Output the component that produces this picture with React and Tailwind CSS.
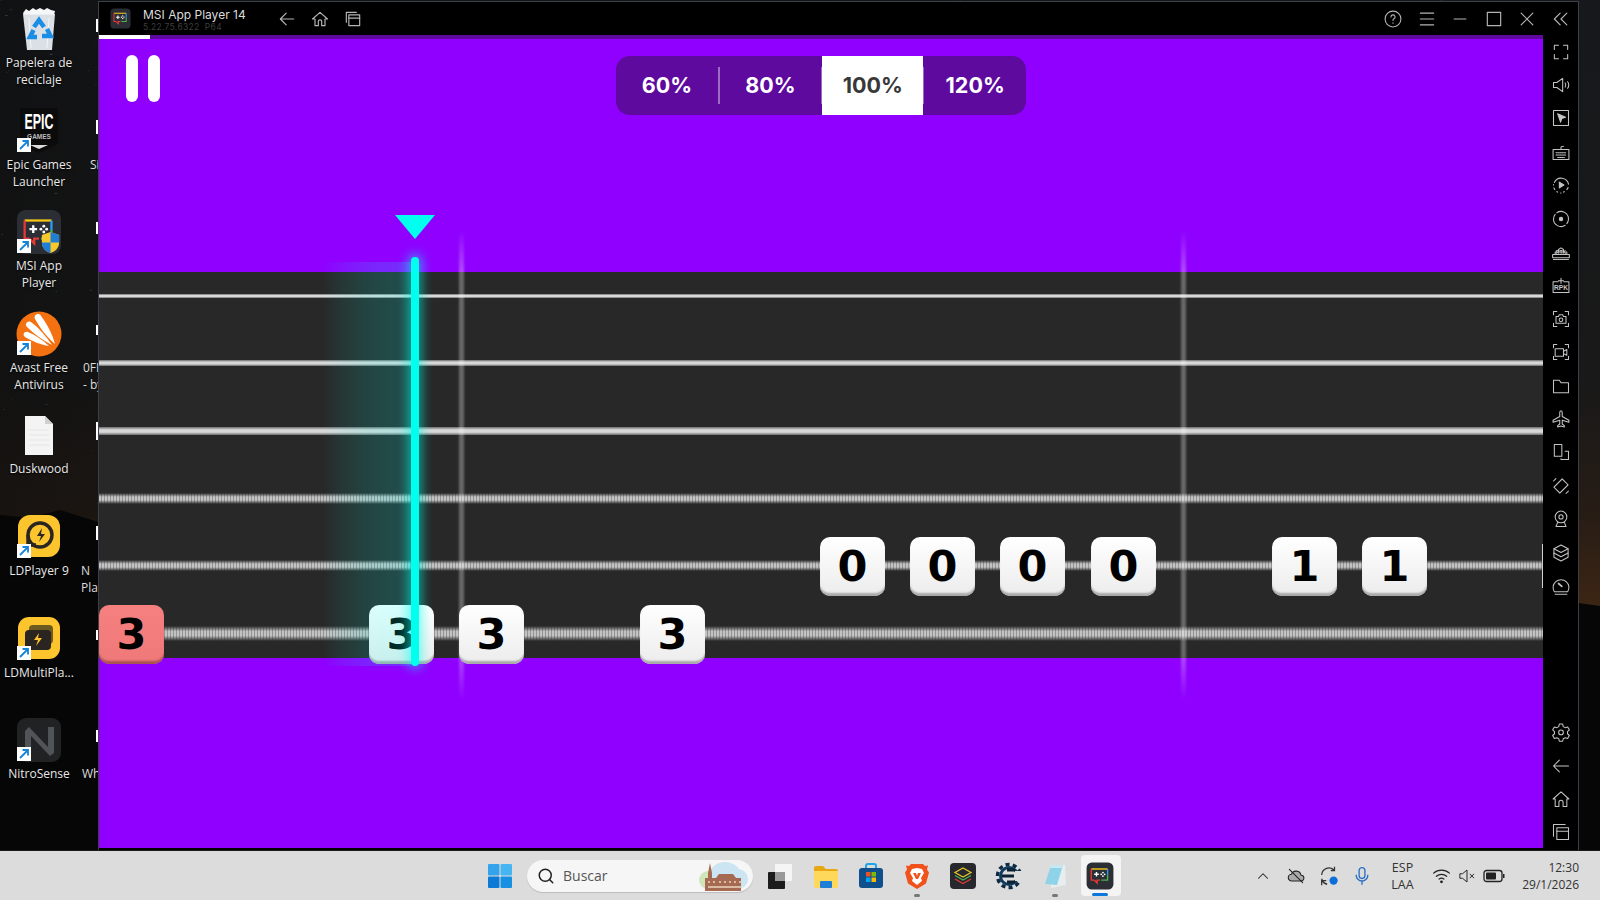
import React from "react";
import { Search } from "lucide-react";

const Ic = ({ children, s = 22, w = 1.4 }) => (
  <svg width={s} height={s} viewBox="0 0 24 24" fill="none" stroke="currentColor" strokeWidth={w} strokeLinecap="round" strokeLinejoin="round">{children}</svg>
);

const MsiLogo = ({ s = 46, shield = false }) => (
  <svg width={s} height={s} viewBox="0 0 48 48">
    <rect x="1" y="1" width="46" height="46" rx="9" fill="#2b2e34" />
    <path d="M9 12H37" stroke="#f5c518" strokeWidth="2.4" fill="none" />
    <path d="M9 12V31H14" stroke="#e53935" strokeWidth="2.4" fill="none" />
    <path d="M14 31L19 36V31H24" stroke="#e53935" strokeWidth="2.4" fill="none" />
    <path d="M37 12V22" stroke="#2e9bf0" strokeWidth="2.4" fill="none" />
    <path d="M37 22V31H26" stroke="#4caf50" strokeWidth="2.4" fill="none" />
    <path d="M14 21h8M18 17v8" stroke="#fff" strokeWidth="2.4" />
    <circle cx="29" cy="18" r="1.5" fill="#fff" /><circle cx="29" cy="24" r="1.5" fill="#fff" />
    <circle cx="26" cy="21" r="1.5" fill="#fff" /><circle cx="32" cy="21" r="1.5" fill="#fff" />
    {shield && (
      <g>
        <path d="M27 27l9-3 9 3v8c0 6-4 9-9 11-5-2-9-5-9-11z" fill="#f7c92c" />
        <path d="M36 24l9 3v8H36zM27 35h9v11c-5-2-9-5-9-11z" fill="#1f7fd6" />
      </g>
    )}
  </svg>
);

const Arrow = () => (
  <span className="absolute left-px bottom-0.5 flex h-[14px] w-[14px] items-center justify-center bg-white">
    <svg width="12" height="12" viewBox="0 0 12 12" fill="none" stroke="#1583d8" strokeWidth="1.8"><path d="M2 10L9.5 2.5M4.5 2H10V7.5" /></svg>
  </span>
);

const Recycle = () => (
  <svg width="46" height="46" viewBox="0 0 46 46">
    <path d="M7 7l3-4 3 2 4-3 3 2 4-2 4 2 3-2 4 2 4 1-1 4H8z" fill="#f4f6f8" />
    <path d="M7 8h32l-3 36H11z" fill="#e6ecf1" opacity="0.95" />
    <path d="M13 12l2 30M33 12l-2 30" stroke="#fff" strokeWidth="1" opacity="0.7" />
    <g fill="none" stroke="#1a8ee6" strokeWidth="4.500">
      <path d="M18 21l5-7 5 7" />
      <path d="M31 23l3.500 7H26" />
      <path d="M21 31h-7l3.500-7" />
    </g>
  </svg>
);

const Epic = () => (
  <svg width="46" height="46" viewBox="0 0 46 46">
    <path d="M4 -2h38v38l-19 9-19-9z" fill="#0b0b0b" />
    <text x="23" y="21" textAnchor="middle" fontFamily="Liberation Sans, sans-serif" fontWeight="700" fontSize="22" fill="#fff" textLength="29" lengthAdjust="spacingAndGlyphs">EPIC</text>
    <text x="23" y="31" textAnchor="middle" fontFamily="Liberation Sans, sans-serif" fontWeight="700" fontSize="6.500" fill="#bbb">GAMES</text>
    <path d="M14 37h18l-9 4z" fill="#ddd" />
  </svg>
);

const Avast = () => (
  <svg width="46" height="46" viewBox="0 0 46 46">
    <circle cx="23" cy="23" r="22.5" fill="#f37111" />
    <path d="M39 33C30 25 24 17 19 8C17 4 23 1 25 5C31 13 36 22 39 33z" fill="#fff" />
    <path d="M36 34C26 29 18 23 11 16C8 13 12 9 15 11C23 17 30 25 36 34z" fill="#fff" />
    <path d="M33 35C25 34 16 30 9 26C6 24 8 20 12 21C19 24 27 29 33 35z" fill="#fff" />
  </svg>
);

const FileIc = () => (
  <svg width="46" height="46" viewBox="0 0 46 46">
    <path d="M9 4h20l8 8v31H9z" fill="#f4f4f4" />
    <path d="M29 4v8h8z" fill="#cfcfcf" />
    <path d="M13 18h20M13 23h20M13 28h20M13 33h20" stroke="#e6e6e6" />
  </svg>
);

const LD = () => (
  <svg width="46" height="46" viewBox="0 0 46 46">
    <rect x="2" y="1" width="42" height="42" rx="12" fill="#fcc52d" />
    <circle cx="24" cy="21" r="12" fill="none" stroke="#2a2520" strokeWidth="3.4" />
    <path d="M12 21v10H20" fill="none" stroke="#2a2520" strokeWidth="3.4" />
    <path d="M26 14l-5 8h4l-2 6 6-8h-4z" fill="#2a2520" />
  </svg>
);

const LDM = () => (
  <svg width="46" height="46" viewBox="0 0 46 46">
    <rect x="2" y="1" width="42" height="42" rx="11" fill="#fcc52d" />
    <rect x="13" y="9" width="24" height="19" rx="4" fill="#6d5a20" />
    <rect x="9" y="14" width="26" height="20" rx="4" fill="#2a2520" />
    <path d="M23 17l-5 7h4l-2 6 6-8h-4z" fill="#fcc52d" />
  </svg>
);

const Nitro = () => (
  <svg width="46" height="46" viewBox="0 0 46 46">
    <rect x="1" y="1" width="44" height="44" rx="9" fill="#202224" />
    <path d="M9 37V14l4-4 19 20V10h6v26l-4 3L15 19v18z" fill="#515456" />
  </svg>
);

const items = [
  { icon: <Recycle />, label: ["Papelera de", "reciclaje"], arrow: false, side: [], pad: "pl-3" },
  { icon: <Epic />, label: ["Epic Games", "Launcher"], arrow: true, side: ["Si"], pad: "pl-3" },
  { icon: <MsiLogo shield />, label: ["MSI App", "Player"], arrow: true, side: [], pad: "pl-3" },
  { icon: <Avast />, label: ["Avast Free", "Antivirus"], arrow: true, side: ["0FF", "- by"], pad: "pl-[5px]" },
  { icon: <FileIc />, label: ["Duskwood"], arrow: false, side: [], pad: "pl-3" },
  { icon: <LD />, label: ["LDPlayer 9"], arrow: true, side: ["N", "Play"], pad: "pl-[3px]" },
  { icon: <LDM />, label: ["LDMultiPla..."], arrow: true, side: [], pad: "pl-3" },
  { icon: <Nitro />, label: ["NitroSense"], arrow: true, side: ["Wh"], pad: "pl-1" },
];

const ticks = ["h-[13px]", "h-[14px]", "h-[12px]", "h-[10px]", "h-[18px]", "h-[14px]", "h-[10px]", "h-[12px]"];

const DesktopIcons = () => (
  <div className="flex w-[98px] shrink-0 overflow-hidden">
    <div className="flex w-[78px] shrink-0 flex-col">
      {items.map((it, i) => (
        <div key={i} className="flex h-[101.6px] shrink-0 flex-col items-center">
          <div className="flex h-[54px] w-full items-center justify-center pt-1">
            <div className="relative h-[46px] w-[46px]">
              {it.icon}
              {it.arrow && <Arrow />}
            </div>
          </div>
          <div className="whitespace-nowrap text-center text-[12px] leading-[17px] text-[#e8e8e8] [text-shadow:0_1px_2px_#000]">
            {it.label.map((l) => <div key={l}>{l}</div>)}
          </div>
        </div>
      ))}
    </div>
    <div className="flex w-5 shrink-0 flex-col">
      {items.map((it, i) => (
        <div key={i} className="flex h-[101.6px] shrink-0 flex-col overflow-hidden">
          <div className="flex h-[54px] items-center justify-end pb-1">
            <span className={`w-0.5 bg-white ${ticks[i]}`} />
          </div>
          <div className={`whitespace-nowrap text-[12px] leading-[17px] text-[#dddddd] ${it.pad}`}>
            {it.side.map((l) => <div key={l}>{l}</div>)}
          </div>
        </div>
      ))}
    </div>
  </div>
);

const TitleBar = () => (
  <div className="flex h-[33px] shrink-0 items-center bg-black text-[#b4b4b4]">
    <div className="ml-[11px] flex h-[21px] w-[21px] items-center justify-center"><MsiLogo s={21} /></div>
    <div className="ml-[12px] flex w-[116px] flex-col pt-px font-['Inter',sans-serif]">
      <span className="whitespace-nowrap text-[12px] leading-[15px] text-[#dcdcdc]">MSI App Player 14</span>
      <span className="whitespace-nowrap text-[8.5px] leading-[10px] tracking-[0.3px] text-[#3d3d3d]">5.22.75.6322&nbsp;&nbsp;P64</span>
    </div>
    <div className="ml-[11px] flex">
      <div className="flex w-[33px] justify-center"><Ic s={20}><path d="M20 12H4M11 5l-7 7 7 7" /></Ic></div>
      <div className="flex w-[33px] justify-center"><Ic s={20}><path d="M6 20v-8H3l9-8 9 8h-3v8h-4v-5a2 2 0 0 0-4 0v5z" /></Ic></div>
      <div className="flex w-[34px] justify-center"><Ic s={20}><path d="M4 16V4h12" /><rect x="7" y="7" width="13" height="13" /><path d="M7 11h13" /></Ic></div>
    </div>
    <div className="ml-auto flex">
      <div className="flex w-[33.5px] justify-center"><Ic s={20} w={1.3}><circle cx="12" cy="12" r="9.5" /><path d="M9.5 9.5a2.5 2.5 0 1 1 3.6 2.3c-.8.4-1.1 1-1.1 2" /><path d="M12 16.6v.4" /></Ic></div>
      <div className="flex w-[33.5px] justify-center"><Ic s={20}><path d="M4 5h16M4 12h16M4 19h16" /></Ic></div>
      <div className="flex w-[33.5px] justify-center"><Ic s={20}><path d="M5 12h14" /></Ic></div>
      <div className="flex w-[33.5px] justify-center"><Ic s={20}><rect x="4" y="4" width="16" height="16" /></Ic></div>
      <div className="flex w-[33.5px] justify-center"><Ic s={20}><path d="M5 5l14 14M19 5L5 19" /></Ic></div>
      <div className="flex w-[34px] justify-center"><Ic s={20}><path d="M11 5l-7 7 7 7M19 5l-7 7 7 7" /></Ic></div>
    </div>
  </div>
);

const tinyText = "Liberation Sans, sans-serif";
const sideTop = [
  <path d="M4 9V4h5M15 4h5v5M20 15v5h-5M9 20H4v-5" />,
  <><path d="M3 9h4l7-5v16l-7-5H3z" /><path d="M17 9.5q1.6 2.5 0 5M20 8q2.6 4 0 8" /></>,
  <><rect x="3" y="3" width="18" height="18" /><path d="M8 7l9.5 4-4.5 1.5L11.5 17z" fill="currentColor" /></>,
  <><rect x="2.5" y="9" width="19" height="12" /><path d="M12 9V6.5C12 5 13 5 15 5" /><path d="M6 13h12M6 15.5h12M8 18.5h8" strokeDasharray="1.5 1" /></>,
  <><path d="M4 9a9 9 0 0 1 17 2M20.5 15a9 9 0 0 1-1.5 2.5M16 20l-1 .5M12 21.500h-.5M8 20.500l-1-.5M4.500 17.500l-1-2M3 12v-.5" /><path d="M10 8.500l5.500 3.500-5.500 3.500z" fill="currentColor" /></>,
  <><path d="M7 4.500A9 9 0 0 1 21 12a9 9 0 0 1-2 5.500M17 19.500A9 9 0 0 1 3 12a9 9 0 0 1 2-5.500" /><circle cx="12" cy="12" r="2" fill="currentColor" /></>,
  <><path d="M2 15h20v4H2zM5 15v-3h14v3M9 12V9l3-2 3 2v3" /><path d="M3 21h18" strokeDasharray="1.500 1" /><text x="12" y="14.500" textAnchor="middle" fontSize="6" fontFamily={tinyText} fontWeight="700" fill="currentColor" stroke="none">RTK</text></>,
  <><path d="M2.500 8h6M15.500 8h6v13h-19V8M12 4v6M9 7h6" /><text x="12" y="18.500" textAnchor="middle" fontSize="8" fontFamily={tinyText} fontWeight="700" fill="currentColor" stroke="none">RPK</text></>,
  <><path d="M3 7V3h4M17 3h4v4M21 17v4h-4M7 21H3v-4" /><path d="M6 9h3l1-2h4l1 2h3v8H6z" /><circle cx="12" cy="13" r="2.200" /></>,
  <><path d="M3 7V3h4M17 3h4v4M21 17v4h-4M7 21H3v-4" /><rect x="5" y="8" width="10" height="9" /><path d="M15 11l4-2v7l-4-2" /></>,
  <path d="M3 5h7l2 3h9v12H3z" />,
  <path d="M12 2c1 0 1.500 1 1.500 2.500V9l8 4.500V16l-8-2.500V18l2.500 2v1.500L12 20.500 8 21.500V20l2.500-2v-4.500L2.500 16v-2.500l8-4.500V4.500C10.500 3 11 2 12 2z" />,
  <><rect x="4" y="3" width="9" height="14" /><path d="M17 11h4v10h-9v-1" /></>,
  <><rect x="5" y="7" width="14" height="10" transform="rotate(-45 12 12)" /><path d="M3 6l3-3M18 21l3-3" strokeDasharray="1.500 1" /></>,
  <><circle cx="12" cy="9.500" r="7" /><circle cx="12" cy="9.500" r="2.500" /><path d="M8 16l-2 5h12l-2-5" /></>,
  <><path d="M12 2.500l8.500 4.500v10L12 21.500 3.500 17V7z" /><path d="M3.500 7L12 11.500 20.500 7M3.500 12L12 16.500 20.500 12" /></>,
  <><path d="M4 19a9.500 9.500 0 1 1 16 0z" /><path d="M9 9l4 3.500" strokeWidth="2" /><path d="M5 22h14" strokeDasharray="1.500 1" /></>,
];
const sideBottom = [
  <><path d="M10 2.500h4l.7 3 2.300 1.300 3-.9 2 3.500-2.200 2.100v2.600l2.200 2.100-2 3.500-3-.9-2.300 1.300-.7 3h-4l-.7-3L7 18.800l-3 .9-2-3.500 2.200-2.100v-2.600L2 9.400l2-3.500 3 .9 2.300-1.300z" /><circle cx="12" cy="12.500" r="2.800" /></>,
  <path d="M21 12H3M10 5l-7 7 7 7" />,
  <path d="M5 21v-9H2.500L12 3.500l9.500 8.500H19v9h-4.500v-5a2.500 2.500 0 0 0-5 0v5z" />,
  <><path d="M3 17V3h14" /><rect x="7" y="7" width="14" height="14" /><path d="M7 11h14" /></>,
];

const SideBar = () => (
  <div className="relative -mb-0.5 flex w-[35px] shrink-0 flex-col justify-between bg-black pb-px text-[#c4c4c4]">
    <span className="absolute -left-px top-[509px] h-[44px] w-px bg-[#cfcfcf]" />
    <div className="flex flex-col">
      {sideTop.map((p, i) => (
        <div key={i} className="flex h-[33.4px] items-center justify-center"><Ic s={20} w={1.25}>{p}</Ic></div>
      ))}
    </div>
    <div className="flex flex-col">
      {sideBottom.map((p, i) => (
        <div key={i} className="flex h-[33.4px] items-center justify-center"><Ic s={20} w={1.25}>{p}</Ic></div>
      ))}
    </div>
  </div>
);

const SpeedPill = () => (
  <div className="flex h-[59px] w-[410px] items-stretch rounded-[14px] bg-[#5e0a9e] font-['Inter',sans-serif] text-[21.5px] font-bold text-white">
    <div className="flex flex-1 items-center justify-center">60%</div>
    <div className="my-[11px] w-0.5 bg-white/40" />
    <div className="flex flex-1 items-center justify-center">80%</div>
    <div className="my-[11px] w-px bg-white/40" />
    <div className="flex w-[101px] items-center justify-center bg-white text-[#383838]">100%</div>
    <div className="my-[11px] w-px bg-white/40" />
    <div className="flex flex-1 items-center justify-center">120%</div>
  </div>
);

const Note = ({ pos, n, red }) => (
  <div className={`absolute z-20 flex h-[59px] w-[65px] items-center justify-center rounded-[10px] font-['DejaVu_Sans',sans-serif] text-[43px] font-bold leading-none text-black ${pos} ${red ? "bg-[linear-gradient(180deg,#f68080,#ef7878)] shadow-[inset_0_-4px_2px_-1px_#a85252]" : "bg-[linear-gradient(180deg,#ffffff,#ececec)] shadow-[inset_0_-4px_2px_-1px_#a9a9a9]"}`}>
    {n}
  </div>
);

const Wound = ({ h }) => (
  <div className={`${h} w-full shrink-0 bg-[linear-gradient(180deg,#282828,rgba(40,40,40,0.1)_35%,rgba(40,40,40,0.1)_65%,#282828),repeating-linear-gradient(90deg,#d4d4d4_0_2px,#a0a0a0_2px_3px)]`} />
);
const Plain = ({ h }) => (
  <div className={`${h} w-full shrink-0 bg-[linear-gradient(180deg,#6a6a6a,#d8d8d8_35%,#d8d8d8_65%,#6a6a6a)]`} />
);
const Str = ({ children }) => <div className="flex h-0 items-center">{children}</div>;

const Board = () => (
  <div className="relative mt-[157px] flex h-[386px] flex-col gap-[67.6px] bg-[#282828] pt-[23.5px]">
    <Str><Plain h="h-[4px]" /></Str>
    <Str><Plain h="h-[6px]" /></Str>
    <Str><Plain h="h-[8px]" /></Str>
    <Str><Wound h="h-[11px]" /></Str>
    <Str><Wound h="h-[11px]" /></Str>
    <Str><Wound h="h-[15px]" /></Str>

    <div className="absolute left-[360px] top-[-42px] z-10 h-[470px] w-[5px] bg-[linear-gradient(180deg,transparent,rgba(255,255,255,0.3)_9%,rgba(255,255,255,0.3)_90%,transparent)] blur-[1px]" />
    <div className="absolute left-[1082px] top-[-42px] z-10 h-[470px] w-[5px] bg-[linear-gradient(180deg,transparent,rgba(255,255,255,0.3)_9%,rgba(255,255,255,0.3)_90%,transparent)] blur-[1px]" />

    <Note pos="left-0 top-[333px]" n="3" red />
    <Note pos="left-[270px] top-[333px]" n="3" />
    <Note pos="left-[360px] top-[333px]" n="3" />
    <Note pos="left-[541px] top-[333px]" n="3" />
    <Note pos="left-[721px] top-[265px]" n="0" />
    <Note pos="left-[811px] top-[265px]" n="0" />
    <Note pos="left-[901px] top-[265px]" n="0" />
    <Note pos="left-[992px] top-[265px]" n="0" />
    <Note pos="left-[1173px] top-[265px]" n="1" />
    <Note pos="left-[1263px] top-[265px]" n="1" />

    <div className="absolute left-[224px] top-[-10px] z-30 h-[404px] w-[88px] bg-[linear-gradient(90deg,transparent,rgba(0,255,238,0.07)_22%,rgba(0,255,238,0.14)_55%,rgba(0,255,238,0.18))]" />
    <div className="absolute left-[296px] top-[-57px] z-30 h-6 w-10 bg-[#00ffee] [clip-path:polygon(0_0,100%_0,50%_100%)]" />
    <div className="absolute left-[312px] top-[-15px] z-30 h-[409px] w-2 rounded-full bg-[#00ffee] shadow-[0_0_11px_3px_rgba(0,255,238,0.55)]" />
  </div>
);

const Game = () => (
  <div className="flex min-w-0 flex-1 flex-col bg-[#8f00ff]">
    <div className="flex h-1 shrink-0 bg-[#5e0a9e]"><div className="w-[51px] bg-white" /></div>
    <div className="grid h-[76px] shrink-0 grid-cols-[1fr_auto_1fr] items-start pt-[17px]">
      <div className="flex gap-[10px] pl-[27px]">
        <span className="-mt-px h-[47px] w-3 rounded-full bg-white" />
        <span className="-mt-px h-[47px] w-3 rounded-full bg-white" />
      </div>
      <SpeedPill />
    </div>
    <Board />
  </div>
);

const Win = () => (
  <div className="mt-px flex h-[849px] w-[1481px] shrink-0 flex-col border-x border-t border-[#3b4048] bg-black">
    <TitleBar />
    <div className="flex min-h-0 flex-1 pb-0.5">
      <Game />
      <SideBar />
    </div>
  </div>
);

const specks = Array.from({ length: 320 }, (_, i) => ({
  x: (i * 97.3) % 100,
  y: (i * i * 0.37 + i * 13) % 60,
  o: 0.05 + ((i * 7) % 10) / 70,
}));

const Wallpaper = () => (
  <svg className="absolute inset-0" width="1600" height="850" viewBox="0 0 1600 850" preserveAspectRatio="none">
    <defs>
      <linearGradient id="sky" x1="0" y1="0" x2="0" y2="1">
        <stop offset="0" stopColor="#16181b" />
        <stop offset="0.45" stopColor="#191919" />
        <stop offset="0.6" stopColor="#261c15" />
        <stop offset="0.7" stopColor="#3a2414" />
      </linearGradient>
      <linearGradient id="dim" x1="0" y1="0" x2="1" y2="0">
        <stop offset="0" stopColor="#0c0c0c" stopOpacity="0.55" />
        <stop offset="0.07" stopColor="#0c0c0c" stopOpacity="0.4" />
        <stop offset="0.9" stopColor="#0c0c0c" stopOpacity="0" />
      </linearGradient>
    </defs>
    <rect width="1600" height="850" fill="url(#sky)" />
    <rect width="1600" height="850" fill="url(#dim)" />
    <path d="M0 515L30 518 60 510 98 522 400 560 1000 590 1578 603 1600 606V850H0z" fill="#060606" />
    {specks.map((p, i) => (
      <rect key={i} x={`${p.x}%`} y={`${p.y}%`} width={i % 3 === 0 ? 3 : 1} height="1" fill="#fff" opacity={p.o} />
    ))}
  </svg>
);

const TaskView = () => (
  <svg width="28" height="28" viewBox="0 0 28 28">
    <rect x="2" y="10" width="17" height="17" rx="1" fill="#1c1c1c" />
    <rect x="9" y="2" width="17" height="17" rx="1" fill="#f5f5f5" />
    <rect x="9" y="10" width="10" height="9" fill="#9a9a9a" />
  </svg>
);
const Explorer = () => (
  <svg width="28" height="28" viewBox="0 0 28 28">
    <path d="M2 6a2 2 0 0 1 2-2h7l3 3h10a2 2 0 0 1 2 2v15H2z" fill="#e5a812" />
    <path d="M2 9h24v15a2 2 0 0 1-2 2H4a2 2 0 0 1-2-2z" fill="#fdd85b" />
    <rect x="8" y="19" width="12" height="7" rx="1" fill="#1f7fd6" />
  </svg>
);
const Store = () => (
  <svg width="28" height="28" viewBox="0 0 28 28">
    <path d="M9 7V4a2 2 0 0 1 2-2h6a2 2 0 0 1 2 2v3" fill="none" stroke="#21a3e8" strokeWidth="2" />
    <rect x="2" y="6" width="24" height="20" rx="3" fill="#0e4f8c" />
    <rect x="9" y="10" width="4.500" height="4.500" fill="#f25022" /><rect x="14.500" y="10" width="4.500" height="4.500" fill="#7fba00" />
    <rect x="9" y="15.500" width="4.500" height="4.500" fill="#00a4ef" /><rect x="14.500" y="15.500" width="4.500" height="4.500" fill="#ffb900" />
  </svg>
);
const Brave = () => (
  <svg width="28" height="28" viewBox="0 0 28 28">
    <path d="M8 2h12l2 2 3-.5-1 4 2 3-3 11-9 5.500-9-5.500-3-11 2-3-1-4 3 .5z" fill="#f1511b" />
    <path d="M14 6l5 1 2 4-3 5 1 3-5 4-5-4 1-3-3-5 2-4z" fill="#fff" />
    <path d="M10 11h3l1 3 1-3h3l-3 6h-2z" fill="#f1511b" />
  </svg>
);
const Cube = () => (
  <svg width="28" height="28" viewBox="0 0 28 28">
    <rect x="1" y="1" width="26" height="26" rx="4" fill="#26282d" />
    <path d="M14 6l8 4.500-8 4.500-8-4.500z" fill="none" stroke="#e6c229" strokeWidth="1.300" />
    <path d="M6 13.500l8 4.500 8-4.500" fill="none" stroke="#4caf50" strokeWidth="1.300" />
    <path d="M6 17l8 4.500 8-4.500" fill="none" stroke="#e53935" strokeWidth="1.300" />
  </svg>
);
const Cheat = () => (
  <svg width="28" height="28" viewBox="0 0 28 28">
    <circle cx="14" cy="14" r="11.500" fill="none" stroke="#0c2a44" strokeWidth="3.500" strokeDasharray="4 3.200" />
    <circle cx="14" cy="14" r="8.500" fill="none" stroke="#0f3a5c" strokeWidth="3" />
    <path d="M12 8h8M7 14h12M12 20h8" stroke="#0c2033" strokeWidth="3" />
    <rect x="20" y="9" width="8" height="10" fill="#dcdcdc" />
  </svg>
);
const Notepad = () => (
  <svg width="28" height="28" viewBox="0 0 28 28">
    <path d="M9 3l15 0 1 20-15 3z" fill="#e8edf0" />
    <path d="M4 22L10 3h12L16 23z" fill="#8fd3e8" />
    <path d="M10 3h12l-1 3H9z" fill="#c7e8f2" />
  </svg>
);
const City = () => (
  <svg width="50" height="30" viewBox="0 0 50 30">
    <ellipse cx="9" cy="19" rx="9" ry="9" fill="#cfe6b8" />
    <ellipse cx="26" cy="13" rx="15" ry="12" fill="#cbe6f2" />
    <ellipse cx="39" cy="18" rx="10" ry="10" fill="#cbe6f2" />
    <path d="M6 30V17h3V12l2-10 2 10v5h4l3-4h14l3 4h5v13z" fill="#a66a52" />
    <path d="M9 21h2M14 21h2M20 21h2M25 21h2M30 21h2M35 21h2M40 21h2M9 26h33" stroke="#ecd5ba" strokeWidth="1.400" />
  </svg>
);

const taskIcons = [
  { c: <TaskView /> },
  { c: <Explorer /> },
  { c: <Store /> },
  { c: <Brave />, dot: true },
  { c: <Cube /> },
  { c: <Cheat /> },
  { c: <Notepad />, dot: true },
  { c: <MsiLogo s={28} />, active: true },
];

const Tray = () => (
  <div className="ml-auto flex h-full w-[354px] shrink-0 items-center text-[#222] font-['Open_Sans',sans-serif]">
    <div className="flex w-[33px] justify-center"><Ic s={18}><path d="M6 15l6-6 6 6" /></Ic></div>
    <div className="flex w-[33px] justify-center">
      <Ic s={20} w={1.3}><path d="M7 18a4 4 0 0 1-.5-8 6 6 0 0 1 11.500 1 3.500 3.500 0 0 1 0 7z" fill="#aaa" /><path d="M4 4l16 16" /></Ic>
    </div>
    <div className="flex w-[33px] justify-center">
      <svg width="22" height="22" viewBox="0 0 24 24" fill="none" stroke="#333" strokeWidth="1.400">
        <path d="M4 11a8 8 0 0 1 14-5M18 2v4h-4M4 15a8 8 0 0 0 6 6M4 22v-5h5" />
        <circle cx="17" cy="17" r="4.500" fill="#0a6fd8" stroke="none" />
      </svg>
    </div>
    <div className="flex w-[33px] justify-center">
      <svg width="20" height="22" viewBox="0 0 24 24" fill="none" stroke="#2b6fc4" strokeWidth="1.600" strokeLinecap="round">
        <rect x="8.500" y="2" width="7" height="13" rx="3.500" /><path d="M5 11a7 7 0 0 0 14 0M12 18v4" />
      </svg>
    </div>
    <div className="ml-[1.500px] flex w-[46px] flex-col items-center text-[12.5px] leading-[17px] text-[#333]"><span>ESP</span><span>LAA</span></div>
    <div className="ml-[3px] flex w-[26px] justify-center">
      <Ic s={19} w={1.5}><path d="M2 9a15 15 0 0 1 20 0M5.500 13a10 10 0 0 1 13 0M9 16.500a5 5 0 0 1 6 0" /><circle cx="12" cy="20" r="1" fill="currentColor" /></Ic>
    </div>
    <div className="flex w-6 justify-center">
      <Ic s={18} w={1.3}><path d="M3 9h3l6-5v16l-6-5H3z" /><path d="M16 9.500l5 5M21 9.500l-5 5" /></Ic>
    </div>
    <div className="flex w-[30px] justify-center">
      <svg width="22" height="14" viewBox="0 0 22 14"><rect x="1" y="1.500" width="18" height="11" rx="2.500" fill="none" stroke="#222" strokeWidth="1.300" /><rect x="3" y="3.500" width="10" height="7" rx="1" fill="#222" /><rect x="20" y="5" width="1.500" height="4" fill="#222" /></svg>
    </div>
    <div className="flex flex-1 flex-col items-end pr-[21px] text-[12px] leading-[17px] text-[#333]"><span>12:30</span><span>29/1/2026</span></div>
  </div>
);

const Taskbar = () => (
  <div className="flex h-[50px] shrink-0 items-center border-t border-[#1a1a1a] bg-[#dcdcdc] pl-[487px] font-['Open_Sans',sans-serif]">
    <svg width="26" height="26" viewBox="0 0 26 26" className="shrink-0">
      <rect x="1" y="1" width="11.500" height="11.500" rx="1" fill="#34a3ec" /><rect x="13.500" y="1" width="11.500" height="11.500" rx="1" fill="#46b5f2" />
      <rect x="1" y="13.500" width="11.500" height="11.500" rx="1" fill="#0d7bd6" /><rect x="13.500" y="13.500" width="11.500" height="11.500" rx="1" fill="#1890e2" />
    </svg>
    <div className="ml-[14px] flex h-8 w-[226px] shrink-0 items-center rounded-full bg-[#f6f6f6] pl-[10px] pr-1 text-[14px] text-[#555] shadow-[0_1px_1px_rgba(0,0,0,0.15)]">
      <Search size={18} strokeWidth={2} className="text-[#222]" />
      <span className="ml-2">Buscar</span>
      <span className="ml-auto flex"><City /></span>
    </div>
    <div className="ml-1 flex">
      {taskIcons.map((t, i) => (
        <div key={i} className="relative flex h-[41px] w-[45.8px] items-center justify-center">
          {t.active && <span className="absolute inset-y-0 left-[3px] w-10 rounded-[4px] bg-[#f4f4f4]" />}
          <span className="relative flex">{t.c}</span>
          {t.dot && <span className="absolute bottom-[-1px] h-[3px] w-[6px] rounded-full bg-[#777]" />}
          {t.active && <span className="absolute bottom-0 h-[3px] w-[16px] rounded-full bg-[#0a78dc]" />}
        </div>
      ))}
    </div>
    <Tray />
  </div>
);

export default function App() {
  return (
    <div className="flex h-[900px] w-[1600px] flex-col overflow-hidden bg-black font-['Open_Sans',sans-serif]">
      <div className="relative flex h-[850px] shrink-0">
        <Wallpaper />
        <div className="relative flex">
          <DesktopIcons />
          <Win />
        </div>
      </div>
      <Taskbar />
    </div>
  );
}
